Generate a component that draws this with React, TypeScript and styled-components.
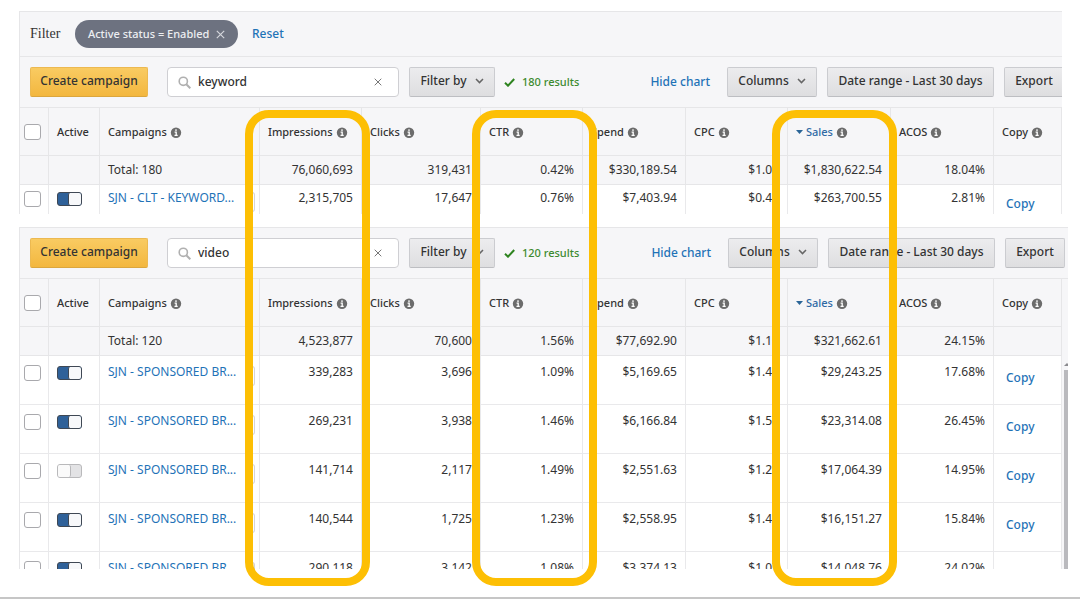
import React from 'react';
import styled, { createGlobalStyle, css } from 'styled-components';

const GlobalStyle = createGlobalStyle`
  * { box-sizing: border-box; }
  body {
    margin: 0;
    background: #fff;
    color: #333;
    font: 400 12px/16px "Noto Sans", "Open Sans", sans-serif;
  }
  button, input { font: inherit; color: inherit; margin: 0; }
`;

const Page = styled.main`
  position: relative;
  display: flex;
  flex-direction: column;
  gap: 13px;
  padding: 11px 12px 28px 19px;
  border-bottom: 2px solid #c6c6c6;
`;

const Panel = styled.section<{ $inset?: number; $height: number }>`
  height: ${p => p.$height}px;
  margin-right: ${p => p.$inset ?? 0}px;
  overflow: hidden;
  border-top: 1px solid #e6e6e8;
  border-left: 1px solid #e6e6e8;
  background: #f6f6f8;
`;

const FilterRow = styled.div`
  display: flex;
  align-items: center;
  height: 45px;
  padding-left: 10px;
  border-bottom: 1px solid #e6e6e8;
`;

const FilterLabel = styled.span`
  width: 45px;
  font: 14px/16px "Liberation Serif", serif;
`;

const Chip = styled.span`
  display: flex;
  align-items: center;
  justify-content: space-between;
  width: 163px;
  height: 28px;
  margin-right: 14px;
  padding: 0 13px;
  border-radius: 14px;
  background: #6d7280;
  color: #eceef1;
  font-size: 11px;
  font-weight: 500;
`;

const PlainButton = styled.button`
  display: flex;
  padding: 0;
  border: 0;
  background: none;
  cursor: pointer;
`;

const TextLink = styled.a`
  color: #1f73b7;
  text-decoration: none;
  white-space: nowrap;
`;

const BarLink = styled(TextLink)`
  font-weight: 500;
`;

const Toolbar = styled.div<{ $end: number }>`
  display: flex;
  align-items: center;
  height: 50px;
  margin-right: ${p => p.$end}px;
  padding-left: 10px;
`;

const Button = styled.button<{ $width: number; $primary?: boolean }>`
  display: flex;
  flex: none;
  align-items: center;
  justify-content: center;
  gap: 8px;
  width: ${p => p.$width}px;
  height: 30px;
  padding: 0 0 2px;
  border: 1px solid #cbccd0;
  border-bottom-color: #bdbec2;
  border-radius: 2px;
  background: linear-gradient(#ececee, #dedee0);
  font-weight: 500;
  white-space: nowrap;
  cursor: pointer;
  ${p => p.$primary && css`
    border-color: #ecb951 #ecb951 #dba63e;
    background: linear-gradient(#f9cb62, #f3b73f);
  `}
`;

const SearchBox = styled.label`
  display: flex;
  align-items: center;
  flex: none;
  gap: 7px;
  width: 232px;
  height: 30px;
  margin: 0 10px 0 19px;
  padding: 0 16px 0 10px;
  border: 1px solid #cfcfd3;
  border-radius: 4px;
  background: #fff;
`;

const SearchInput = styled.input`
  flex: 1;
  width: 0;
  padding: 0;
  border: 0;
  outline: 0;
  background: none;
  font-weight: 500;
`;

const Results = styled.span`
  display: flex;
  align-items: center;
  gap: 7px;
  margin-left: 9px;
  color: #3c8a2e;
  font-size: 11px;
  font-weight: 500;
`;

const Actions = styled.div`
  display: flex;
  align-items: center;
  gap: 10px;
  margin-left: auto;
  ${BarLink} { margin-right: 7px; }
`;

const TableArea = styled.div`
  display: flex;
  border-top: 1px solid #e6e6e8;
`;

const Table = styled.table`
  flex: 1;
  width: 0;
  table-layout: fixed;
  border-collapse: separate;
  border-spacing: 0;
`;

const HeadCell = styled.th`
  height: 48px;
  padding: 0 0 0 8px;
  border-right: 1px solid #e6e6e8;
  border-bottom: 1px solid #e6e6e8;
  font-size: 11px;
  font-weight: 500;
  text-align: left;
  white-space: nowrap;
`;

const HeadLabel = styled.span<{ $sorted?: boolean }>`
  display: flex;
  align-items: center;
  gap: 3px;
  color: ${p => (p.$sorted ? '#2f6aa5' : 'inherit')};
`;

const TotalCell = styled.td<{ $left?: boolean }>`
  height: 29px;
  padding: 0 8px;
  border-right: 1px solid #e6e6e8;
  border-bottom: 1px solid #e6e6e8;
  text-align: ${p => (p.$left ? 'left' : 'right')};
`;

const Cell = styled.td<{ $top: number; $kind?: 'box' | 'name' | 'copy' }>`
  height: 49px;
  padding: ${p => p.$top}px 8px 0;
  border-right: 1px solid #e9e9eb;
  border-bottom: 1px solid #e9e9eb;
  background: #fff;
  text-align: ${p => (p.$kind ? 'left' : 'right')};
  vertical-align: top;
  white-space: nowrap;
  ${p => p.$kind === 'copy' && css`
    padding: ${p.$top + 6}px 0 0 12px;
    font-weight: 500;
  `}
  ${p => p.$kind === 'box' && css`padding-top: ${p.$top + 1}px;`}
`;

const CheckBox = styled.input`
  display: block;
  appearance: none;
  width: 17px;
  height: 16px;
  margin-left: -4px;
  border: 1px solid #a9a9ad;
  border-radius: 3px;
  background: #fff;
`;

const Toggle = styled.input`
  display: block;
  appearance: none;
  width: 25px;
  height: 14px;
  border: 1px solid #b9b9bb;
  border-radius: 3px;
  background: #e3e3e5;
  &::after {
    content: "";
    display: block;
    width: 12px;
    height: 12px;
    border-right: 1px solid #b9b9bb;
    border-radius: 2px;
    background: #fafafa;
  }
  &:checked { border-color: #3f4854; background: #2f6199; }
  &:checked::after {
    margin-left: auto;
    border-right: 0;
    border-left: 1px solid #3f4854;
    background: #f7f8fa;
  }
`;

const NameLine = styled.div`
  display: flex;
  justify-content: space-between;
`;

const RowHandle = styled.span`
  width: 8px;
  height: 20px;
  margin: 2px -4px -6px 0;
  border: 1px solid #d4d4d8;
  border-left: 0;
  border-radius: 0 3px 3px 0;
`;

const ScrollGutter = styled.div`
  display: flex;
  flex-direction: column;
  align-items: flex-end;
  gap: 4px;
  width: 6px;
  padding-top: 84px;
`;

const ScrollThumb = styled.div`
  flex: 1;
  width: 4px;
  background: #b9b9bd;
`;

/* Highlight boxes drawn over the columns; they keep pace with the column widths. */
const Highlight = styled.div<{ $left: number }>`
  position: absolute;
  top: 110px;
  bottom: 11px;
  left: calc(100% * ${p => p.$left} / 1080);
  width: calc(100% * 125 / 1080);
  border: 8px solid #fdbf04;
  border-radius: 24px;
  pointer-events: none;
`;

const InfoIcon = () => (
  <svg width="12" height="12" viewBox="0 0 12 12" aria-hidden="true">
    <circle cx="6" cy="6.8" r="5.2" fill="#6c6c6c" />
    <path d="M6 3.2v1.7M4.6 6.1h1.6v3.3M4.5 9.4h3.2" stroke="#fff" strokeWidth="1.3" fill="none" />
  </svg>
);
const Cross = ({ size, color }: { size: number; color: string }) => (
  <svg width={size} height={size} viewBox="0 0 8 8" aria-hidden="true">
    <path d="M.7.7l6.6 6.6M7.3.7L.7 7.3" stroke={color} strokeWidth="1" />
  </svg>
);
const Chevron = () => (
  <svg width="9" height="6" viewBox="0 0 9 6" aria-hidden="true">
    <path d="M1 1l3.5 3.6L8 1" fill="none" stroke="#666" strokeWidth="1.5" />
  </svg>
);
const SearchIcon = () => (
  <svg width="13" height="13" viewBox="0 0 13 13" fill="none" stroke="#b0b0b0" aria-hidden="true">
    <circle cx="5.3" cy="5.3" r="4.1" strokeWidth="1.6" />
    <path d="M8.3 8.3l4 4" strokeWidth="2" />
  </svg>
);
const CheckIcon = () => (
  <svg width="11" height="9" viewBox="0 0 11 9" aria-hidden="true">
    <path d="M1 4.8l3 2.9L10.2 1" fill="none" stroke="#2f8420" strokeWidth="2" />
  </svg>
);
const SortIcon = () => (
  <svg width="7" height="4" viewBox="0 0 7 4" aria-hidden="true">
    <path d="M0 0h7L3.5 4z" fill="#2a6597" />
  </svg>
);
const ScrollArrow = () => (
  <svg width="4" height="3" viewBox="0 0 4 3" aria-hidden="true">
    <path d="M0 3l3-3 1 1v2z" fill="#8a8a8e" />
  </svg>
);

const columns = [29, 51, 160, 102, 119, 102, 103, 102, 103, 103, 68];
const tableWidth = columns.reduce((a, b) => a + b, 0);
const headings = ['Campaigns', 'Impressions', 'Clicks', 'CTR', 'Spend', 'CPC', 'Sales', 'ACOS', 'Copy'];

type Campaign = { name: string; on: boolean; values: string[] };
type GridProps = { totals: string[]; rows: Campaign[]; top: number };

const CampaignTable = ({ totals, rows, top }: GridProps) => (
  <Table>
    <colgroup>
      {columns.map((w, i) => <col key={i} style={{ width: `${(w / tableWidth) * 100}%` }} />)}
    </colgroup>
    <thead>
      <tr>
        <HeadCell><CheckBox type="checkbox" aria-label="Select all campaigns" /></HeadCell>
        <HeadCell>Active</HeadCell>
        {headings.map(h => (
          <HeadCell key={h}>
            <HeadLabel $sorted={h === 'Sales'}>
              {h === 'Sales' && <SortIcon />}{h}<InfoIcon />
            </HeadLabel>
          </HeadCell>
        ))}
      </tr>
    </thead>
    <tbody>
      <tr>
        <TotalCell /><TotalCell />
        {totals.map((t, i) => <TotalCell key={t} $left={i === 0}>{t}</TotalCell>)}
        <TotalCell />
      </tr>
      {rows.map(r => (
        <tr key={r.values[0]}>
          <Cell $top={top} $kind="box"><CheckBox type="checkbox" aria-label={`Select ${r.name}`} /></Cell>
          <Cell $top={top + 1} $kind="box">
            <Toggle type="checkbox" role="switch" defaultChecked={r.on} aria-label="Active" />
          </Cell>
          <Cell $top={top} $kind="name">
            <NameLine><TextLink href="#">{r.name}</TextLink><RowHandle /></NameLine>
          </Cell>
          {r.values.map(v => <Cell key={v} $top={top}>{v}</Cell>)}
          <Cell $top={top} $kind="copy"><TextLink href="#">Copy</TextLink></Cell>
        </tr>
      ))}
    </tbody>
  </Table>
);

const CampaignToolbar = ({ query, count, end }: { query: string; count: number; end: number }) => (
  <Toolbar $end={end}>
    <Button $width={118} $primary>Create campaign</Button>
    <SearchBox>
      <SearchIcon />
      <SearchInput type="text" defaultValue={query} aria-label="Search campaigns" />
      <PlainButton aria-label="Clear search"><Cross size={8} color="#777" /></PlainButton>
    </SearchBox>
    <Button $width={86}>Filter by <Chevron /></Button>
    <Results><CheckIcon />{count} results</Results>
    <Actions>
      <BarLink href="#">Hide chart</BarLink>
      <Button $width={90}>Columns <Chevron /></Button>
      <Button $width={167}>Date range - Last 30 days</Button>
      <Button $width={60}>Export</Button>
    </Actions>
  </Toolbar>
);

const keywordRows: Campaign[] = [
  { name: 'SJN - CLT - KEYWORD...', on: true, values: ['2,315,705', '17,647', '0.76%', '$7,403.94', '$0.42', '$263,700.55', '2.81%'] },
];
const video = 'SJN - SPONSORED BR...';
const videoRows: Campaign[] = [
  { name: video, on: true, values: ['339,283', '3,696', '1.09%', '$5,169.65', '$1.40', '$29,243.25', '17.68%'] },
  { name: video, on: true, values: ['269,231', '3,938', '1.46%', '$6,166.84', '$1.57', '$23,314.08', '26.45%'] },
  { name: video, on: false, values: ['141,714', '2,117', '1.49%', '$2,551.63', '$1.21', '$17,064.39', '14.95%'] },
  { name: video, on: true, values: ['140,544', '1,725', '1.23%', '$2,558.95', '$1.48', '$16,151.27', '15.84%'] },
  { name: video, on: true, values: ['290,118', '3,142', '1.08%', '$3,374.13', '$1.07', '$14,048.76', '24.02%'] },
];

export default function App() {
  return (
    <>
      <GlobalStyle />
      <Page>
        <Panel $height={203} $inset={6}>
          <FilterRow>
            <FilterLabel>Filter</FilterLabel>
            <Chip>
              Active status = Enabled
              <PlainButton aria-label="Remove filter"><Cross size={9} color="#d5d7dc" /></PlainButton>
            </Chip>
            <BarLink href="#">Reset</BarLink>
          </FilterRow>
          <CampaignToolbar query="keyword" count={180} end={-2} />
          <TableArea>
            <CampaignTable
              top={5}
              rows={keywordRows}
              totals={['Total: 180', '76,060,693', '319,431', '0.42%', '$330,189.54', '$1.03', '$1,830,622.54', '18.04%']}
            />
          </TableArea>
        </Panel>
        <Panel $height={342}>
          <CampaignToolbar query="video" count={120} end={3} />
          <TableArea>
            <CampaignTable
              top={8}
              rows={videoRows}
              totals={['Total: 120', '4,523,877', '70,600', '1.56%', '$77,692.90', '$1.10', '$321,662.61', '24.15%']}
            />
            <ScrollGutter><ScrollArrow /><ScrollThumb /></ScrollGutter>
          </TableArea>
        </Panel>
        <Highlight $left={245} />
        <Highlight $left={472} />
        <Highlight $left={772} />
      </Page>
    </>
  );
}
